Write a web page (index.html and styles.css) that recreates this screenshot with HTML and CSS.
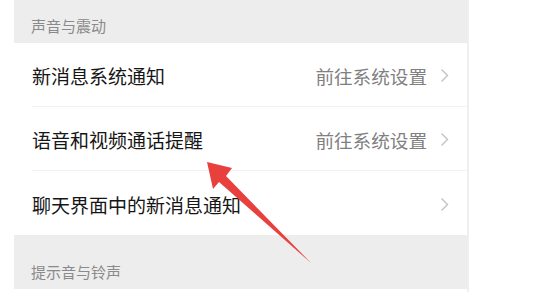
FILE: index.html
```html
<!DOCTYPE html>
<html lang="zh">
<head>
<meta charset="utf-8">
<link rel="stylesheet" href="styles.css">
</head>
<body>
<div class="panel">
  <div class="section-title first">声音与震动</div>
  <div class="row">
    <div class="row-inner">
      <span class="label">新消息系统通知</span>
      <span class="value">前往系统设置<svg class="chev" viewBox="0 0 9 15" width="9" height="15"><path d="M1.5 1.5 L7.5 7.5 L1.5 13.5" fill="none" stroke="#c2c2c2" stroke-width="1.4"/></svg></span>
    </div>
  </div>
  <div class="row">
    <div class="row-inner">
      <span class="label">语音和视频通话提醒</span>
      <span class="value">前往系统设置<svg class="chev" viewBox="0 0 9 15" width="9" height="15"><path d="M1.5 1.5 L7.5 7.5 L1.5 13.5" fill="none" stroke="#c2c2c2" stroke-width="1.4"/></svg></span>
    </div>
  </div>
  <div class="row">
    <div class="row-inner last">
      <span class="label">聊天界面中的新消息通知</span>
      <span class="value"><svg class="chev" viewBox="0 0 9 15" width="9" height="15"><path d="M1.5 1.5 L7.5 7.5 L1.5 13.5" fill="none" stroke="#c2c2c2" stroke-width="1.4"/></svg></span>
    </div>
  </div>
  <div class="section-title second">提示音与铃声</div>
</div>
<svg class="arrow" viewBox="0 0 559 307" width="559" height="307">
  <polygon points="207,162 232,168 226,176 311,263 219,182 213,189" fill="#e8403d"/>
</svg>
</body>
</html>
```

FILE: styles.css
```css
html, body {
  margin: 0;
  padding: 0;
  background: #ffffff;
}
body {
  font-family: "Noto Sans CJK SC", "Noto Sans", sans-serif;
  position: relative;
  width: 559px;
  height: 307px;
  overflow: hidden;
}
.panel {
  margin-left: 14px;
  width: 453px;
  height: 292px;
  border-right: 2px solid #efefef;
  display: flex;
  flex-direction: column;
}
.section-title {
  background: #ededed;
  color: #8a8a8a;
  font-size: 15px;
  padding-left: 17px;
  display: flex;
  align-items: center;
}
.section-title.first {
  height: 43px;
  padding-top: 7px;
  box-sizing: border-box;
}
.section-title.second {
  height: 54px;
  padding-top: 18px;
  box-sizing: border-box;
}
.row {
  background: #ffffff;
  padding-left: 18px;
  height: 64px;
}
.row-inner {
  height: 100%;
  box-sizing: border-box;
  border-bottom: 1px solid #f1f1f1;
  display: flex;
  align-items: center;
  justify-content: space-between;
  padding-right: 18px;
  padding-top: 2px;
}
.row-inner.last {
  border-bottom: none;
}
.label {
  font-size: 19px;
  color: #161616;
}
.value {
  font-size: 18.6px;
  color: #808080;
  display: flex;
  align-items: center;
}
.chev {
  margin-left: 13px;
  display: block;
}
.arrow {
  position: absolute;
  left: 0;
  top: 0;
}
```
